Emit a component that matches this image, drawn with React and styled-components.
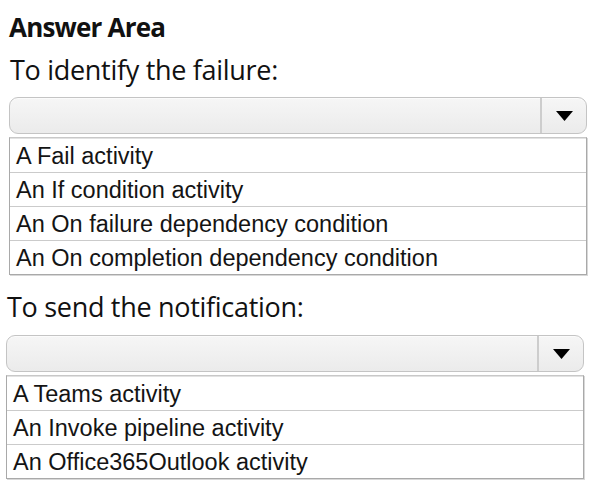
import React from "react";
import styled, { createGlobalStyle } from "styled-components";

const GlobalStyle = createGlobalStyle`
  html, body {
    margin: 0;
    padding: 0;
    background: #ffffff;
  }
`;

const Page = styled.div`
  width: 600px;
  height: 486px;
  box-sizing: border-box;
  padding: 12px 0 0 0;
  background: #fff;
  font-family: "Open Sans", "Noto Sans", sans-serif;
  color: #111;
  overflow: hidden;
`;

const Title = styled.h1`
  margin: 0 0 0 9px;
  font-size: 26px;
  font-weight: 700;
  letter-spacing: -0.8px;
  line-height: 30px;
`;

const Section = styled.section`
  margin-left: ${(p) => p.$left}px;
  margin-top: ${(p) => p.$top}px;
  width: 578px;
`;

const Prompt = styled.div`
  font-size: 27px;
  line-height: 34px;
  letter-spacing: -0.3px;
  margin-left: 1px;
  margin-bottom: ${(p) => p.$gap}px;
`;

const Select = styled.div`
  display: flex;
  height: 37px;
  box-sizing: border-box;
  border: 1px solid #c4c4c4;
  border-radius: 9px;
  background: linear-gradient(#f6f6f6, #ebebeb);
  box-shadow: inset 0 1px 0 #fbfbfb;
`;

const SelectField = styled.div`
  flex: 1;
  border-right: 2px solid #cdcdcd;
`;

const Arrow = styled.div`
  width: 44px;
  display: flex;
  align-items: center;
  justify-content: center;
`;

const Options = styled.ul`
  list-style: none;
  margin: 3px 0 0 0;
  padding: 0;
  border: 1px solid #a9a9a9;
  border-top-color: #c8c8c8;
  box-shadow: 1px 1px 0 #d8d8d8;
  background: #fff;
  font-family: "Liberation Sans", Arial, sans-serif;
  font-size: 23.5px;
  color: #141414;
`;

const Option = styled.li`
  height: 33px;
  line-height: 35px;
  padding-left: 6px;
  border-top: 1px solid #cbcbcb;
  white-space: nowrap;
  &:first-child {
    border-top: 1px solid #e2e2e2;
  }
`;

const Dropdown = ({ options }) => (
  <>
    <Select>
      <SelectField />
      <Arrow>
        <svg width="17" height="10" viewBox="0 0 17 10">
          <path d="M0 0 H17 L8.5 10 Z" fill="#000" />
        </svg>
      </Arrow>
    </Select>
    <Options>
      {options.map((o) => (
        <Option key={o}>{o}</Option>
      ))}
    </Options>
  </>
);

const failureOptions = [
  "A Fail activity",
  "An If condition activity",
  "An On failure dependency condition",
  "An On completion dependency condition",
];

const notifyOptions = [
  "A Teams activity",
  "An Invoke pipeline activity",
  "An Office365Outlook activity",
];

export default function App() {
  return (
    <Page>
      <GlobalStyle />
      <Title>Answer Area</Title>
      <Section $left={9} $top={11}>
        <Prompt $gap={10}>To identify the failure:</Prompt>
        <Dropdown options={failureOptions} />
      </Section>
      <Section $left={6} $top={15}>
        <Prompt $gap={11}>To send the notification:</Prompt>
        <Dropdown options={notifyOptions} />
      </Section>
    </Page>
  );
}
